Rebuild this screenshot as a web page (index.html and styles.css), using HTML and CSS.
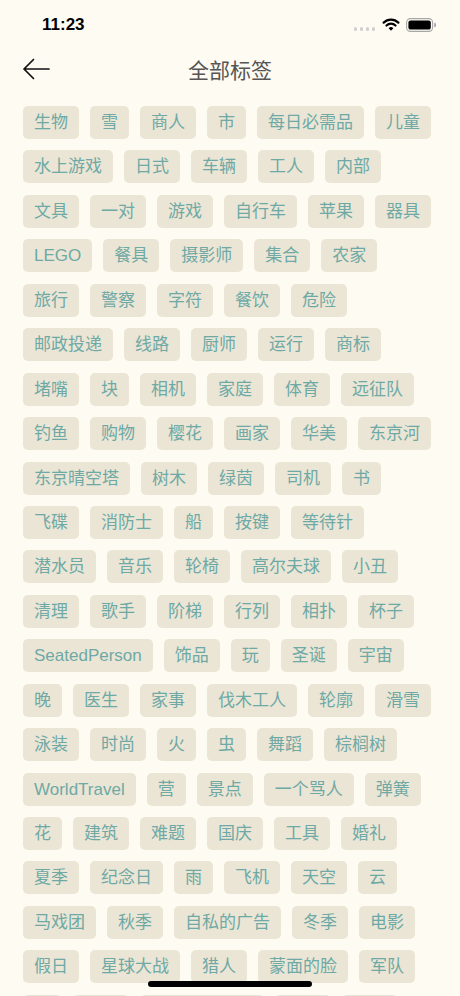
FILE: index.html
```html
<!DOCTYPE html>
<html lang="zh-CN">
<head>
  <meta charset="UTF-8">
  <title>全部标签</title>
  <link rel="stylesheet" href="styles.css">
</head>
<body>

<div class="status">
  <span class="time">11:23</span>
  <div class="status-icons">
    <span class="signal"><i></i><i></i><i></i><i></i></span>
    <svg class="wifi" width="18" height="13" viewBox="0 0 18 13">
      <path d="M1.6 4.6 A10.5 10.5 0 0 1 16.4 4.6" fill="none" stroke="#000" stroke-width="2.2" stroke-linecap="round"/>
      <path d="M4.5 7.5 A6.4 6.4 0 0 1 13.5 7.5" fill="none" stroke="#000" stroke-width="2.2" stroke-linecap="round"/>
      <path d="M9 12.7 L6.6 10.2 A3.4 3.4 0 0 1 11.4 10.2 Z" fill="#000"/>
    </svg>
    <svg class="battery" width="30" height="14" viewBox="0 0 30 14">
      <rect x="0.6" y="0.6" width="26" height="12.8" rx="3.8" fill="none" stroke="#a8a8a8" stroke-width="1.1"/>
      <rect x="2.4" y="2.4" width="22.4" height="9.2" rx="2.2" fill="#000"/>
      <path d="M28.2 4.8 a1.8 2 0 0 1 0 4.4 Z" fill="#a8a8a8"/>
    </svg>
  </div>
</div>

<div class="nav">
  <div class="nav-left">
    <svg class="back" width="28" height="22" viewBox="0 0 28 22">
      <path d="M27 11 H2 M11.5 1.5 L2 11 L11.5 20.5" fill="none" stroke="#111" stroke-width="1.7" stroke-linecap="round" stroke-linejoin="round"/>
    </svg>
  </div>
  <h1 class="title">全部标签</h1>
  <div></div>
</div>

<div class="tags" id="tags"></div>

<div class="home-bar"></div>

<script>
  // all tags, in display order
  const tags = [
    "生物", "雪", "商人", "市", "每日必需品", "儿童",
    "水上游戏", "日式", "车辆", "工人", "内部",
    "文具", "一对", "游戏", "自行车", "苹果", "器具",
    "LEGO", "餐具", "摄影师", "集合", "农家",
    "旅行", "警察", "字符", "餐饮", "危险",
    "邮政投递", "线路", "厨师", "运行", "商标",
    "堵嘴", "块", "相机", "家庭", "体育", "远征队",
    "钓鱼", "购物", "樱花", "画家", "华美", "东京河",
    "东京晴空塔", "树木", "绿茵", "司机", "书",
    "飞碟", "消防士", "船", "按键", "等待针",
    "潜水员", "音乐", "轮椅", "高尔夫球", "小丑",
    "清理", "歌手", "阶梯", "行列", "相扑", "杯子",
    "SeatedPerson", "饰品", "玩", "圣诞", "宇宙",
    "晚", "医生", "家事", "伐木工人", "轮廓", "滑雪",
    "泳装", "时尚", "火", "虫", "舞蹈", "棕榈树",
    "WorldTravel", "营", "景点", "一个骂人", "弹簧",
    "花", "建筑", "难题", "国庆", "工具", "婚礼",
    "夏季", "纪念日", "雨", "飞机", "天空", "云",
    "马戏团", "秋季", "自私的广告", "冬季", "电影",
    "假日", "星球大战", "猎人", "蒙面的脸", "军队",
    "鸟", "海滩", "可爱的小动物", "节日", "森林",
    "学校", "音乐会", "夜景", "海洋"
  ];

  const list = document.getElementById('tags');
  tags.forEach(name => {
    const el = document.createElement('span');
    el.className = 'tag';
    el.textContent = name;
    list.appendChild(el);
  });
</script>

</body>
</html>
```

FILE: styles.css
```css
html, body {
  margin: 0;
  height: 100%;
}

body {
  background: #fdfbf2;
  font-family: "Liberation Sans", "Noto Sans CJK SC", sans-serif;
  overflow: hidden;
}

/* status bar */
.status {
  height: 50px;
  display: flex;
  align-items: center;
  justify-content: space-between;
  padding: 0 24px 0 42px;
}

.time {
  font-size: 17px;
  font-weight: bold;
  color: #000;
}

.status-icons {
  display: flex;
  align-items: center;
  gap: 6px;
}

.signal {
  display: flex;
  gap: 2.5px;
  margin-top: 8px;
  margin-right: 1px;
}

.signal i {
  width: 3.5px;
  height: 3.5px;
  border-radius: 50%;
  background: #cfcfcf;
}

.wifi {
  margin-top: -1px;
}

/* nav bar */
.nav {
  height: 38px;
  display: grid;
  grid-template-columns: 1fr auto 1fr;
  align-items: center;
}

.nav-left {
  padding-left: 22px;
  display: flex;
  align-items: center;
}

.title {
  margin: 0;
  font-size: 21px;
  font-weight: normal;
  color: #555;
  font-family: "Noto Sans CJK SC", sans-serif;
}

/* tag cloud */
.tags {
  display: flex;
  flex-wrap: wrap;
  column-gap: 11px;
  row-gap: 11.45px;
  padding: 18px 27px 0 23px;
}

.tag {
  height: 33px;
  line-height: 33px;
  padding: 0 11px;
  border-radius: 5px;
  background: #ebe5d5;
  color: #6ea9a5;
  font-size: 17px;
  white-space: nowrap;
}

.home-bar {
  position: fixed;
  left: 148px;
  bottom: 9px;
  width: 164px;
  height: 6px;
  border-radius: 3px;
  background: #000;
}
```
